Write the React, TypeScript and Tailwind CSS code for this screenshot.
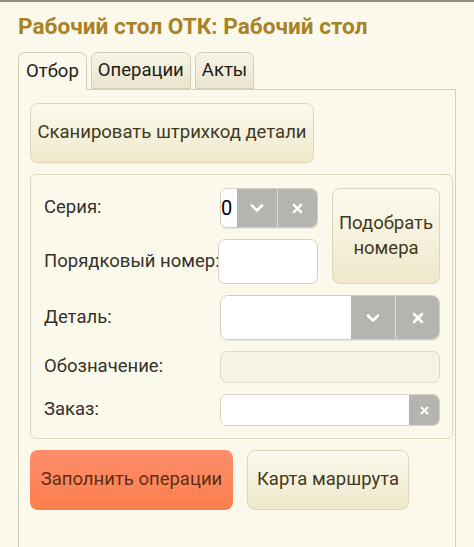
import React from 'react';

const font = { fontFamily: 'Roboto, "Noto Sans", sans-serif' };

const Chevron = ({ size = 14 }: { size?: number }) => (
    <svg width={size} height={size} viewBox="0 0 14 14" fill="none">
        <polyline points="2,4.5 7,9.5 12,4.5" stroke="white" strokeWidth="2.6" strokeLinecap="round" strokeLinejoin="round" />
    </svg>
);

const Cross = ({ size = 12 }: { size?: number }) => (
    <svg width={size} height={size} viewBox="0 0 12 12" fill="none">
        <path d="M2 2 L10 10 M10 2 L2 10" stroke="white" strokeWidth="2.6" strokeLinecap="round" />
    </svg>
);

const tabs = ['Отбор', 'Операции', 'Акты'];

const Label = ({ children }: { children: React.ReactNode }) => (
    <div className="flex items-center text-[18.5px] text-[#35322a] whitespace-nowrap">{children}</div>
);

export default function App() {
    return (
        <div className="min-h-screen bg-[#fbf9ec] border-t-2 border-[#8e8c84] px-[18px]" style={font}>
            <h1 className="pt-[10px] h-[50px] text-[22.6px] leading-[30px] font-bold text-[#a98226]">
                Рабочий стол ОТК: Рабочий стол
            </h1>

            {/* tab strip */}
            <div className="flex gap-[4px] h-[37px] relative z-10">
                {tabs.map((t, i) => (
                    <div
                        key={t}
                        className={
                            i === 0
                                ? 'px-[7px] flex items-center rounded-t-[7px] border border-b-0 border-[#d3cfb8] bg-[#fbf9ec] text-[18.5px] text-[#1e1d18] h-[38px]'
                                : 'px-[6px] flex items-center rounded-t-[7px] border border-[#d3cfb8] bg-gradient-to-b from-[#f7f4e4] to-[#e9e5d0] text-[18.5px] text-[#1e1d18] h-[37px]'
                        }
                    >
                        {t}
                    </div>
                ))}
            </div>

            {/* tab page */}
            <div className="border border-[#d3cfb8] border-b-0 min-h-[460px] px-[11px] pt-[13px]">
                <button className="w-[284px] h-[60px] rounded-[8px] border border-[#dcd6bb] bg-gradient-to-b from-[#fcfaee] to-[#efe8cb] text-[18.5px] text-[#3f3a22] shadow-[0_1px_1px_rgba(0,0,0,0.05)]">
                    Сканировать штрихкод детали
                </button>

                {/* group box */}
                <div className="mt-[11px] w-[423px] rounded-[6px] border border-[#dcd8c2] pl-[13px] pt-[13px] pb-[12px]">
                    <div className="grid grid-cols-[174px_100px_122px] grid-rows-[40px_45px_45px_32px_32px] gap-y-[11px]">
                        <Label>Серия:</Label>
                        <div className="ml-[2px] flex rounded-[7px] overflow-hidden border border-[#d4d0bf] shadow-[0_1px_1px_rgba(0,0,0,0.08)]">
                            <div className="w-[16px] bg-white flex items-center text-[20px] text-black leading-none">0</div>
                            <div className="flex-1 flex items-center justify-center bg-[#b4b4b1]"><Chevron /></div>
                            <div className="w-px bg-[#d9d9d6]" />
                            <div className="flex-1 flex items-center justify-center bg-[#b4b4b1]"><Cross size={11} /></div>
                        </div>
                        <button className="row-span-2 ml-[14px] rounded-[8px] border border-[#dcd6bb] bg-gradient-to-b from-[#fcfaee] to-[#efe8cb] text-[18.5px] leading-[25px] text-[#3f3a22]">
                            Подобрать<br />номера
                        </button>

                        <Label>Порядковый номер:</Label>
                        <div className="rounded-[7px] border border-[#d8d4c2] bg-white" />

                        <Label>Деталь:</Label>
                        <div className="col-span-2 ml-[2px] flex rounded-[8px] overflow-hidden border border-[#d4d0bf] shadow-[0_1px_1px_rgba(0,0,0,0.08)]">
                            <div className="flex-1 bg-white" />
                            <div className="w-[44px] flex items-center justify-center bg-[#b4b4b1]"><Chevron /></div>
                            <div className="w-px bg-[#d9d9d6]" />
                            <div className="w-[43px] flex items-center justify-center bg-[#b4b4b1]"><Cross /></div>
                        </div>

                        <Label>Обозначение:</Label>
                        <div className="col-span-2 ml-[2px] rounded-[7px] border border-[#dedacb] bg-[#f6f3e3]" />

                        <Label>Заказ:</Label>
                        <div className="col-span-2 ml-[2px] flex rounded-[7px] overflow-hidden border border-[#d8d4c2]">
                            <div className="flex-1 bg-white" />
                            <div className="w-[30px] flex items-center justify-center bg-[#b4b4b1]"><Cross size={9} /></div>
                        </div>
                    </div>
                </div>

                <div className="mt-[11px] flex gap-[14px]">
                    <button className="w-[203px] h-[60px] rounded-[8px] bg-gradient-to-b from-[#fe8d6c] to-[#fb7f4c] text-[18.5px] text-[#5e2f14]">
                        Заполнить операции
                    </button>
                    <button className="w-[162px] h-[60px] rounded-[8px] border border-[#dcd6bb] bg-gradient-to-b from-[#fcfaee] to-[#efe8cb] text-[18.5px] text-[#3f3a22]">
                        Карта маршрута
                    </button>
                </div>
            </div>
        </div>
    );
}
